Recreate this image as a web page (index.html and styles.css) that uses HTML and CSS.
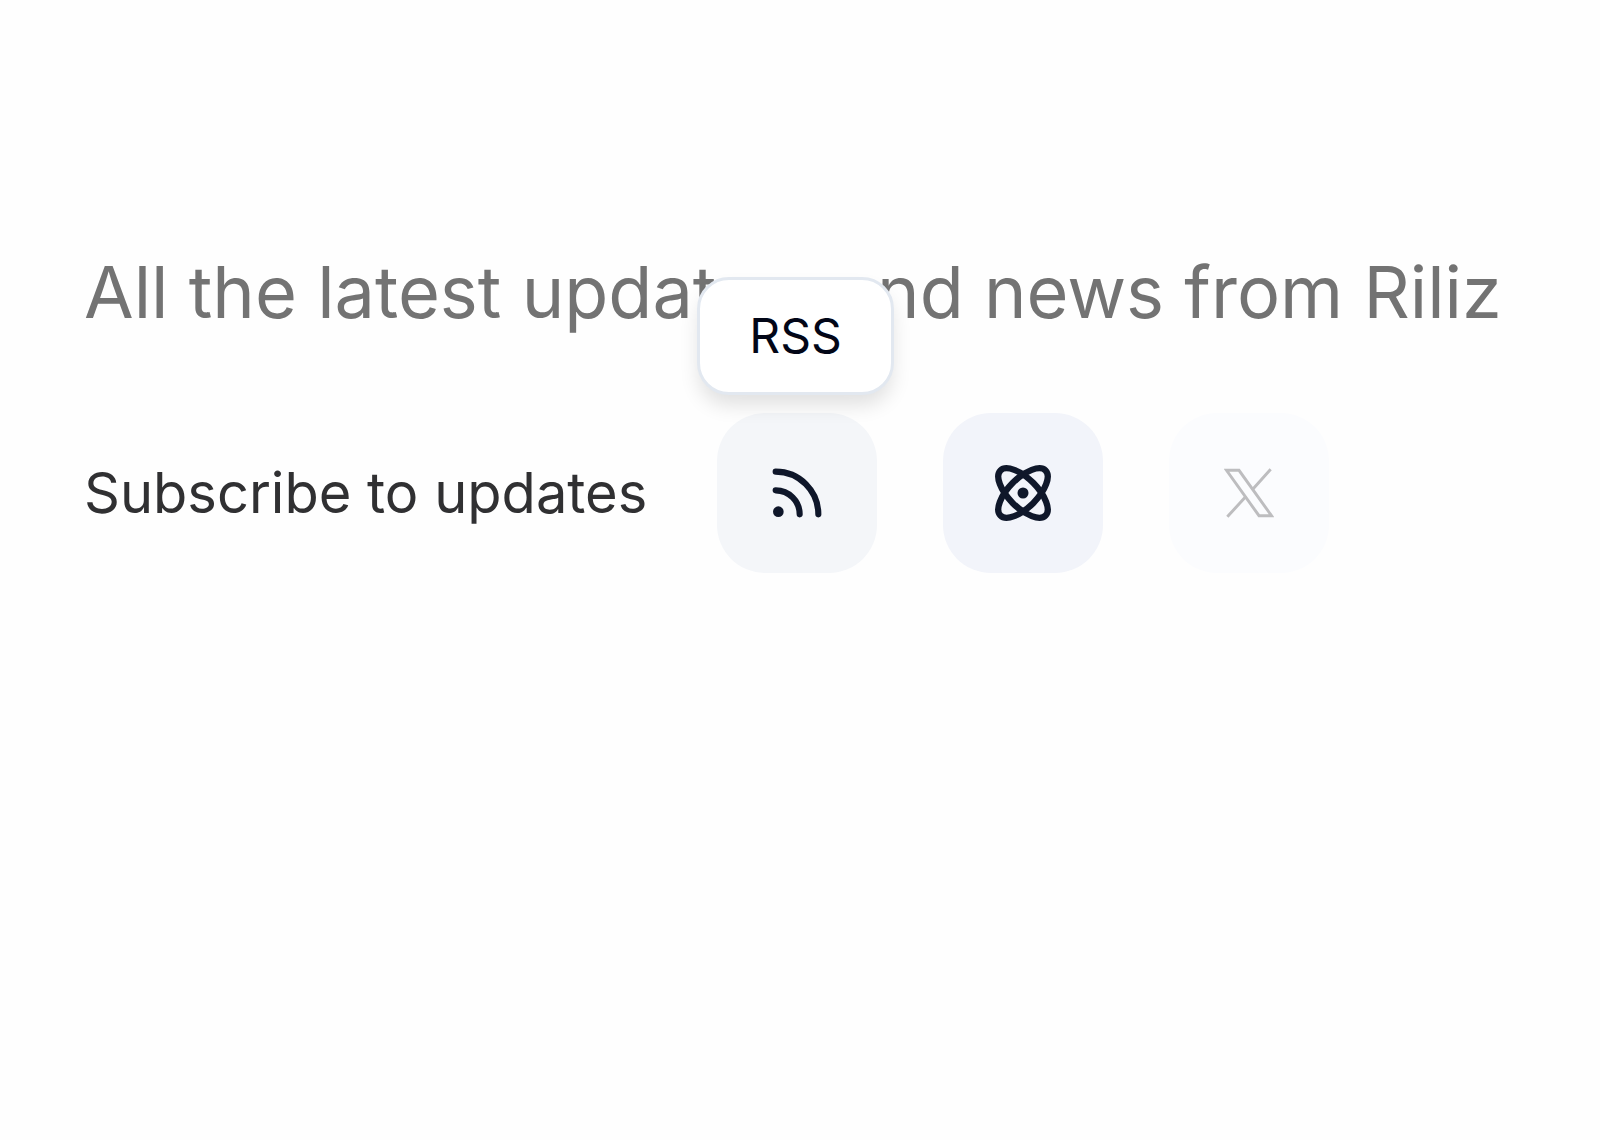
FILE: index.html
```html
<!DOCTYPE html>
<html lang="en">
<head>
    <meta charset="UTF-8">
    <meta name="viewport" content="width=device-width, initial-scale=1.0">
    <title>Riliz Updates</title>
    <link rel="stylesheet" href="styles.css">
</head>
<body>
    <main class="updates">
        <p class="tagline">All the latest updates, and news from Riliz</p>
        <div class="subscribe">
            <span class="subscribe-label">Subscribe to updates</span>
            <div class="subscribe-links">
                <div class="link-wrap">
                    <a class="icon-link" href="#rss" aria-label="RSS" aria-describedby="rssTooltip">
                        <svg class="icon-rss" viewBox="0 0 24 24" fill="none" stroke="currentColor" stroke-width="2.3" stroke-linecap="round" stroke-linejoin="round">
                            <path d="M4 11a9 9 0 0 1 9 9"/>
                            <path d="M4 4a16 16 0 0 1 16 16"/>
                            <circle cx="5" cy="19" r="2" fill="currentColor" stroke="none"/>
                        </svg>
                    </a>
                    <div class="tooltip" id="rssTooltip" role="tooltip">RSS</div>
                </div>
                <a class="icon-link atom" href="#atom" aria-label="Atom">
                    <svg class="icon-atom" viewBox="0 0 24 24" fill="none" stroke="currentColor" stroke-width="2.3" stroke-linecap="round" stroke-linejoin="round">
                        <circle cx="12" cy="12" r="2" fill="currentColor" stroke="none"/>
                        <path d="M20.2 20.2c2.04-2.03.02-7.36-4.5-11.9-4.54-4.52-9.87-6.54-11.9-4.5-2.04 2.03-.02 7.36 4.5 11.9 4.54 4.52 9.87 6.54 11.9 4.5Z"/>
                        <path d="M15.7 15.7c4.52-4.54 6.54-9.87 4.5-11.9-2.03-2.04-7.36-.02-11.9 4.5-4.52 4.54-6.54 9.87-4.5 11.9 2.03 2.04 7.36.02 11.9-4.5Z"/>
                    </svg>
                </a>
                <button class="icon-link" type="button" aria-label="X" disabled>
                    <svg class="icon-x" viewBox="0 0 24 24" fill="none" stroke="currentColor" stroke-width="1.4">
                        <path d="M1.2 1.1h6l15.6 21.8h-6Z"/>
                        <path d="M22.4 .6 13.6 10.4M10.6 13.6 1.6 23.4"/>
                    </svg>
                </button>
            </div>
        </div>
    </main>
</body>
</html>
```
FILE: styles.css
```css
* {
    box-sizing: border-box;
}
body {
    margin: 0;
    font-family: Inter, "Liberation Sans", sans-serif;
    background-color: #fefefe;
    color: #303032;
}
.updates {
    padding: 246px 84px;
}
.tagline {
    margin: 0;
    font-size: 72px;
    line-height: 92px;
    color: #737373;
    white-space: nowrap;
}
.subscribe {
    display: flex;
    align-items: center;
    gap: 70px;
    margin-top: 75px;
}
.subscribe-label {
    font-size: 56px;
    line-height: 64px;
    white-space: nowrap;
}
.subscribe-links {
    display: flex;
    gap: 66px;
}
.link-wrap {
    position: relative;
}
.icon-link {
    display: flex;
    align-items: center;
    justify-content: center;
    width: 160px;
    height: 160px;
    padding: 0;
    border: none;
    border-radius: 48px;
    background-color: #f4f6f9;
    color: #0f172a;
}
.icon-link.atom {
    background-color: #f2f4fa;
}
.icon-link:disabled {
    background-color: #fbfcfe;
    color: #bdbdbf;
}
.icon-rss {
    width: 64px;
    height: 64px;
}
.icon-atom {
    width: 66px;
    height: 66px;
}
.icon-x {
    width: 50px;
    height: 50px;
}
.tooltip {
    position: absolute;
    bottom: calc(100% + 18px);
    left: -20px;
    padding: 28px 49px;
    border: 3px solid #e2e8f0;
    border-radius: 32px;
    background-color: #fff;
    box-shadow: 0 12px 20px -2px rgba(0, 0, 0, 0.12);
    font-size: 48px;
    line-height: 56px;
    color: #020617;
}
```
